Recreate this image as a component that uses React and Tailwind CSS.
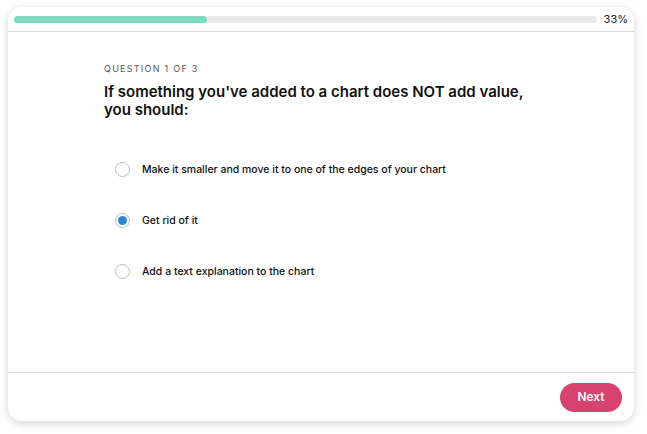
import React from "react";

function Radio({ checked }) {
  return (
    <span className="flex h-[15px] w-[15px] shrink-0 items-center justify-center rounded-full border border-[#bdbdbd] bg-white">
      {checked && <span className="h-[9px] w-[9px] rounded-full bg-[#2b87d3]" />}
    </span>
  );
}

export default function App() {
  const options = [
    { text: "Make it smaller and move it to one of the edges of your chart", checked: false },
    { text: "Get rid of it", checked: true },
    { text: "Add a text explanation to the chart", checked: false },
  ];
  return (
    <div className="h-[434px] w-[647px] bg-white pl-[8px] pt-[7px]" style={{ fontFamily: "Inter, 'Noto Sans', sans-serif" }}>
      <div className="flex h-[414px] w-[626px] flex-col rounded-[14px] bg-white shadow-[0_2px_8px_rgba(0,0,0,0.18)]">
        <div className="flex h-[25px] items-center gap-[7px] border-b border-[#dcdcdc] pl-[6px] pr-[6px]">
          <div className="h-[7px] flex-1 rounded-full bg-[#e9e9e9]">
            <div className="h-[7px] w-[193px] rounded-full bg-[#7fd9bd]" />
          </div>
          <span className="text-[11px] text-[#222]">33%</span>
        </div>
        <div className="flex flex-1 flex-col pl-[96px] pt-[30px]">
          <div className="text-[9px] leading-[13px] tracking-[0.14em] text-[#555]">QUESTION 1 OF 3</div>
          <h1 className="mt-[8px] text-[15px] font-semibold leading-[18px] text-[#111]">
            If something you've added to a chart does NOT add value,
            <br />
            you should:
          </h1>
          <div className="mt-[43px] flex flex-col gap-[36px] pl-[11px]">
            {options.map((o) => (
              <div key={o.text} className="flex items-center gap-[12px]">
                <Radio checked={o.checked} />
                <span className="text-[10.5px] font-medium leading-[15px] text-[#111]">{o.text}</span>
              </div>
            ))}
          </div>
        </div>
        <div className="flex h-[49px] items-center justify-end border-t border-[#dcdcdc] pr-[12px]">
          <button className="h-[29px] w-[62px] rounded-full bg-[#d8426f] text-[12px] font-semibold text-white">Next</button>
        </div>
      </div>
    </div>
  );
}
